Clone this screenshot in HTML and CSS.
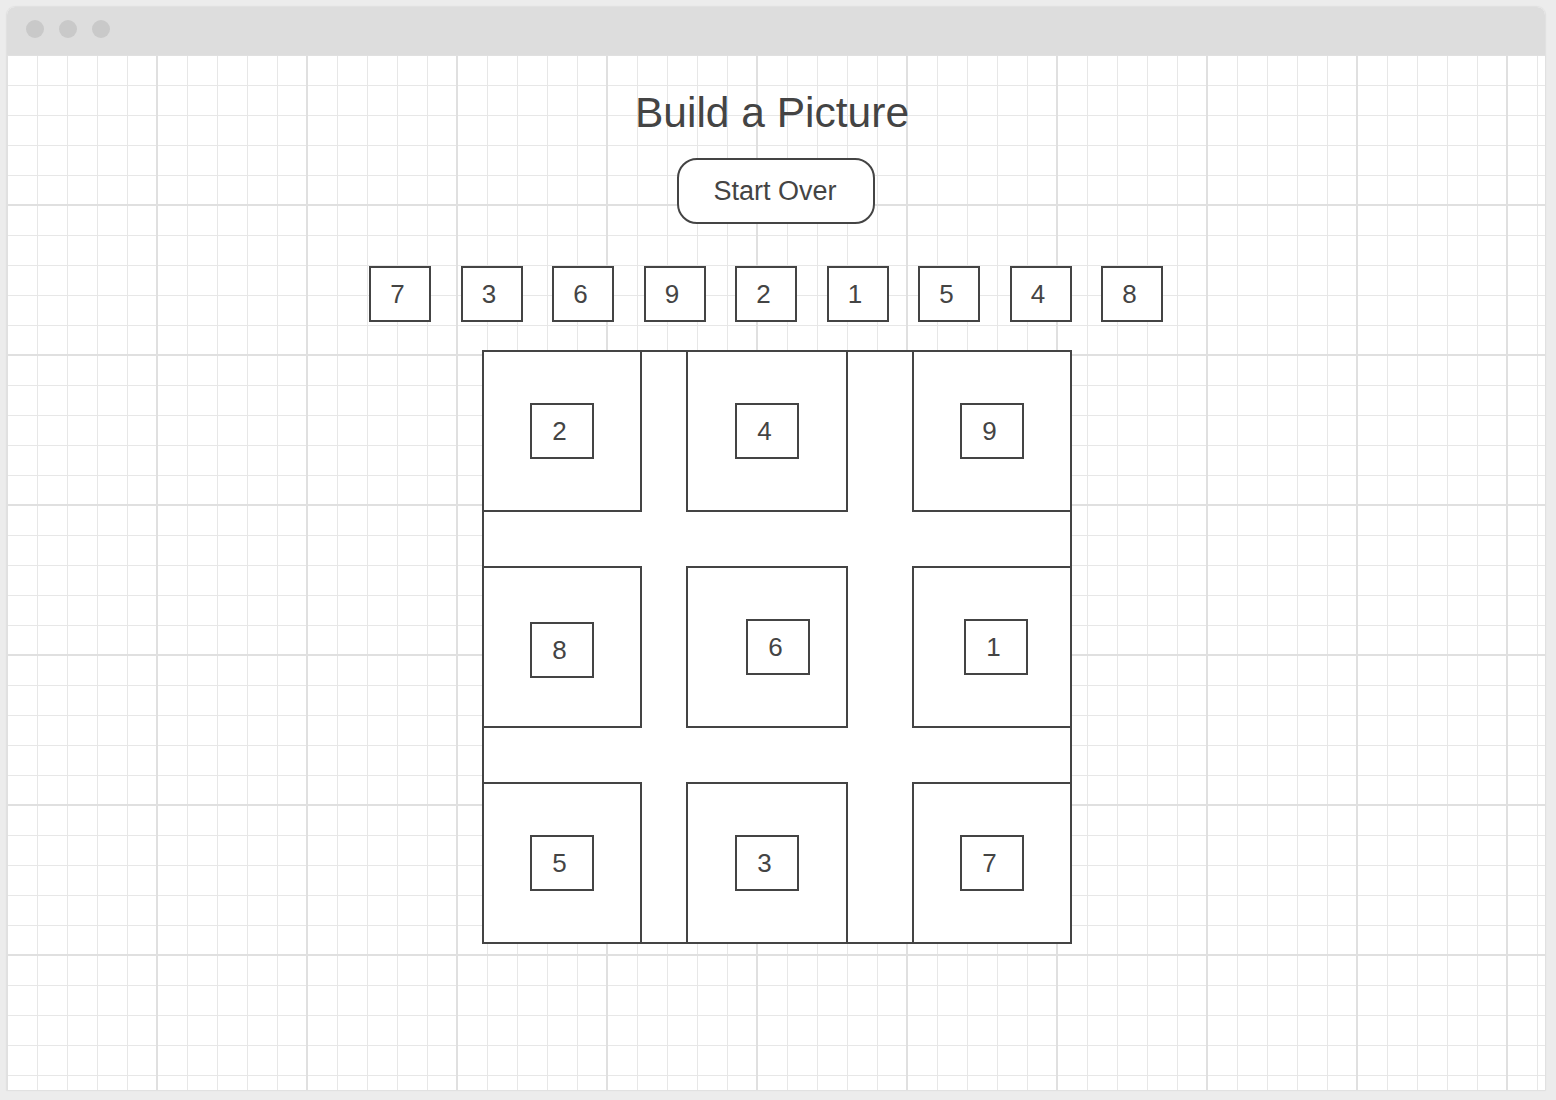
FILE: index.html
```html
<!DOCTYPE html>
<html lang="en">
<head>
    <meta charset="UTF-8">
    <meta name="viewport" content="width=device-width, initial-scale=1.0">
    <title>Build a Picture</title>
    <link rel="stylesheet" href="styles.css">
</head>
<body>
    <div class="window">
        <div class="title-bar">
            <span class="dot"></span>
            <span class="dot"></span>
            <span class="dot"></span>
        </div>

        <div class="canvas">
            <h1 class="page-title">Build a Picture</h1>
            <button class="start-button">Start Over</button>

            <div class="tray">
                <div class="tile">7</div>
                <div class="tile">3</div>
                <div class="tile">6</div>
                <div class="tile">9</div>
                <div class="tile">2</div>
                <div class="tile">1</div>
                <div class="tile">5</div>
                <div class="tile">4</div>
                <div class="tile">8</div>
            </div>

            <div class="board">
                <div class="cell"><div class="tile placed">2</div></div>
                <div class="cell wide"><div class="tile placed">4</div></div>
                <div class="cell"><div class="tile placed">9</div></div>

                <div class="cell"><div class="tile placed drift-down">8</div></div>
                <div class="cell wide"><div class="tile placed drift-right-lg">6</div></div>
                <div class="cell"><div class="tile placed drift-right">1</div></div>

                <div class="cell"><div class="tile placed">5</div></div>
                <div class="cell wide"><div class="tile placed">3</div></div>
                <div class="cell"><div class="tile placed">7</div></div>
            </div>
        </div>
    </div>
</body>
</html>
```

FILE: styles.css
```css
body {
    margin: 0;
    background-color: #ececec;
    font-family: "Liberation Sans", Arial, sans-serif;
    color: #444;
}

.window {
    margin: 7px 11px 10px 7px;
    height: 1083px;
    background-color: white;
    border-radius: 8px 8px 0 0;
    box-shadow: 0 0 1px 1px #e0e0e0;
    overflow: hidden;
    display: flex;
    flex-direction: column;
}

.title-bar {
    height: 48px;
    flex-shrink: 0;
    background-color: #dddddd;
    display: flex;
    gap: 15px;
    padding: 13px 0 0 19px;
    box-sizing: border-box;
}

.dot {
    width: 18px;
    height: 18px;
    border-radius: 50%;
    background-color: #c9c9c9;
}

.canvas {
    flex: 1;
    background-color: white;
    background-image:
        linear-gradient(to right, #e0e0e0 2px, transparent 2px),
        linear-gradient(to bottom, #e0e0e0 2px, transparent 2px),
        linear-gradient(to right, #e7e7e7 1px, transparent 1px),
        linear-gradient(to bottom, #e7e7e7 1px, transparent 1px);
    background-size: 150px 150px, 150px 150px, 30px 30px, 30px 30px;
    background-position: -1px -1px, -1px -1px, 0 0, 0 0;
    display: flex;
    flex-direction: column;
    align-items: center;
    padding-top: 34px;
}

.page-title {
    margin: 0 8px 0 0;
    font-size: 42.5px;
    font-weight: normal;
    line-height: 48px;
}

.start-button {
    margin-top: 21px;
    width: 198px;
    height: 66px;
    border: 2px solid #444;
    border-radius: 20px;
    background-color: white;
    font-family: inherit;
    font-size: 27px;
    color: #444;
    padding-right: 8px;
    cursor: pointer;
}

.tray {
    margin-top: 42px;
    display: flex;
    gap: 29.5px;
    padding-right: 20px;
}

.tile {
    width: 62px;
    height: 56px;
    box-sizing: border-box;
    border: 2px solid #444;
    background-color: white;
    font-size: 26px;
    line-height: 52px;
    text-align: center;
    padding-right: 5px;
}

.board {
    margin: 28px 0 0 2px;
    display: grid;
    grid-template-columns: 204px 226px 160px;
    grid-template-rows: 216px 216px 162px;
    background-color: white;
    box-shadow: inset 0 0 0 2px #444;
}

.cell {
    width: 160px;
    height: 162px;
    box-sizing: border-box;
    border: 2px solid #444;
    background-color: white;
    display: flex;
    align-items: center;
    justify-content: center;
}

.cell.wide {
    width: 162px;
}

.tile.placed {
    width: 64px;
}

.drift-down {
    margin-top: 6px;
}

.drift-right {
    margin-left: 8px;
}

.drift-right-lg {
    margin-left: 22px;
}
```
